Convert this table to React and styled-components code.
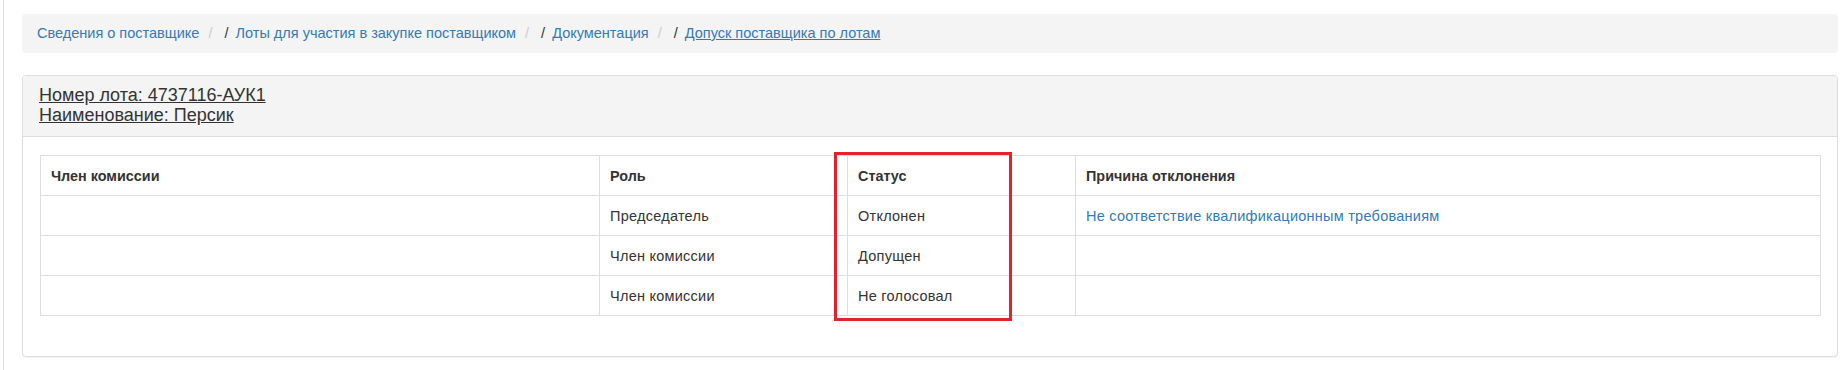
import React from "react";
import styled, { createGlobalStyle } from "styled-components";

const GlobalStyle = createGlobalStyle`
  html, body {
    margin: 0;
    padding: 0;
    background: #ffffff;
  }
  body {
    font-family: "Liberation Sans", Arial, Helvetica, sans-serif;
    font-size: 14px;
    line-height: 20px;
    color: #333333;
  }
  * { box-sizing: border-box; }
`;

const Page = styled.div`
  margin-left: 3px;
  border-left: 1px solid #dddddd;
  min-height: 370px;
  padding: 14px 9px 0 18px;
`;

const Breadcrumb = styled.ol`
  list-style: none;
  margin: 0 0 22px;
  padding: 9px 15px;
  background: #f4f4f4;
  border-radius: 4px;
  font-size: 14.5px;
  line-height: 21px;
  display: flex;
  flex-wrap: wrap;
  white-space: nowrap;
`;

const Crumb = styled.li`
  display: inline-block;
  & + &::before {
    content: "/\\00a0";
    padding: 0 5px 0 9px;
    color: #cccccc;
  }
`;

const Slash = styled.span`
  color: #333333;
  margin-left: 3px;
  padding-right: 3px;
`;

const CrumbLink = styled.a`
  color: #337ab7;
  text-decoration: ${(p) => (p.$active ? "underline" : "none")};
  cursor: pointer;
`;

const Panel = styled.section`
  border: 1px solid #dddddd;
  border-radius: 4px;
  background: #ffffff;
  box-shadow: 0 1px 1px rgba(0, 0, 0, 0.05);
`;

const PanelHeading = styled.div`
  background: #f4f4f4;
  border-bottom: 1px solid #dddddd;
  border-radius: 3px 3px 0 0;
  padding: 9px 16px 11px;
`;

const PanelTitle = styled.div`
  font-size: 18px;
  line-height: 20px;
  color: #333333;
  text-decoration: underline;
`;

const PanelBody = styled.div`
  padding: 18px 16px 40px 17px;
`;

const TableWrap = styled.div`
  position: relative;
`;

const Table = styled.table`
  width: 100%;
  border-collapse: collapse;
  table-layout: fixed;
  border: 1px solid #dddddd;
`;

const Th = styled.th`
  text-align: left;
  font-weight: bold;
  font-size: 14.4px;
  padding: 10px 10px 9px;
  line-height: 20px;
  border: 1px solid #dddddd;
  vertical-align: top;
  color: #333333;
`;

const Td = styled.td`
  padding: 10px 10px 9px;
  font-size: 14.5px;
  letter-spacing: 0.25px;
  line-height: 20px;
  border: 1px solid #dddddd;
  vertical-align: top;
  color: ${(p) => (p.$link ? "#337ab7" : "#333333")};
`;

const Highlight = styled.div`
  position: absolute;
  left: 794px;
  top: -3px;
  width: 178px;
  height: 169px;
  border: 3px solid #e8202a;
  pointer-events: none;
`;

const crumbs = [
  { text: "Сведения о поставщике", slash: false },
  { text: "Лоты для участия в закупке поставщиком", slash: true },
  { text: "Документация", slash: true },
  { text: "Допуск поставщика по лотам", slash: true, active: true },
];

const rows = [
  { member: "", role: "Председатель", status: "Отклонен", reason: "Не соответствие квалификационным требованиям" },
  { member: "", role: "Член комиссии", status: "Допущен", reason: "" },
  { member: "", role: "Член комиссии", status: "Не голосовал", reason: "" },
];

export default function App() {
  return (
    <>
      <GlobalStyle />
      <Page>
        <Breadcrumb>
          {crumbs.map((c) => (
            <Crumb key={c.text}>
              {c.slash && <Slash>/ </Slash>}
              <CrumbLink $active={c.active}>{c.text}</CrumbLink>
            </Crumb>
          ))}
        </Breadcrumb>
        <Panel>
          <PanelHeading>
            <PanelTitle>Номер лота: 4737116-АУК1</PanelTitle>
            <PanelTitle>Наименование: Персик</PanelTitle>
          </PanelHeading>
          <PanelBody>
            <TableWrap>
              <Table>
                <colgroup>
                  <col style={{ width: "559px" }} />
                  <col style={{ width: "248px" }} />
                  <col style={{ width: "228px" }} />
                  <col />
                </colgroup>
                <thead>
                  <tr>
                    <Th>Член комиссии</Th>
                    <Th>Роль</Th>
                    <Th>Статус</Th>
                    <Th>Причина отклонения</Th>
                  </tr>
                </thead>
                <tbody>
                  {rows.map((r, i) => (
                    <tr key={i}>
                      <Td>{r.member}</Td>
                      <Td>{r.role}</Td>
                      <Td>{r.status}</Td>
                      <Td $link>{r.reason}</Td>
                    </tr>
                  ))}
                </tbody>
              </Table>
              <Highlight />
            </TableWrap>
          </PanelBody>
        </Panel>
      </Page>
    </>
  );
}
